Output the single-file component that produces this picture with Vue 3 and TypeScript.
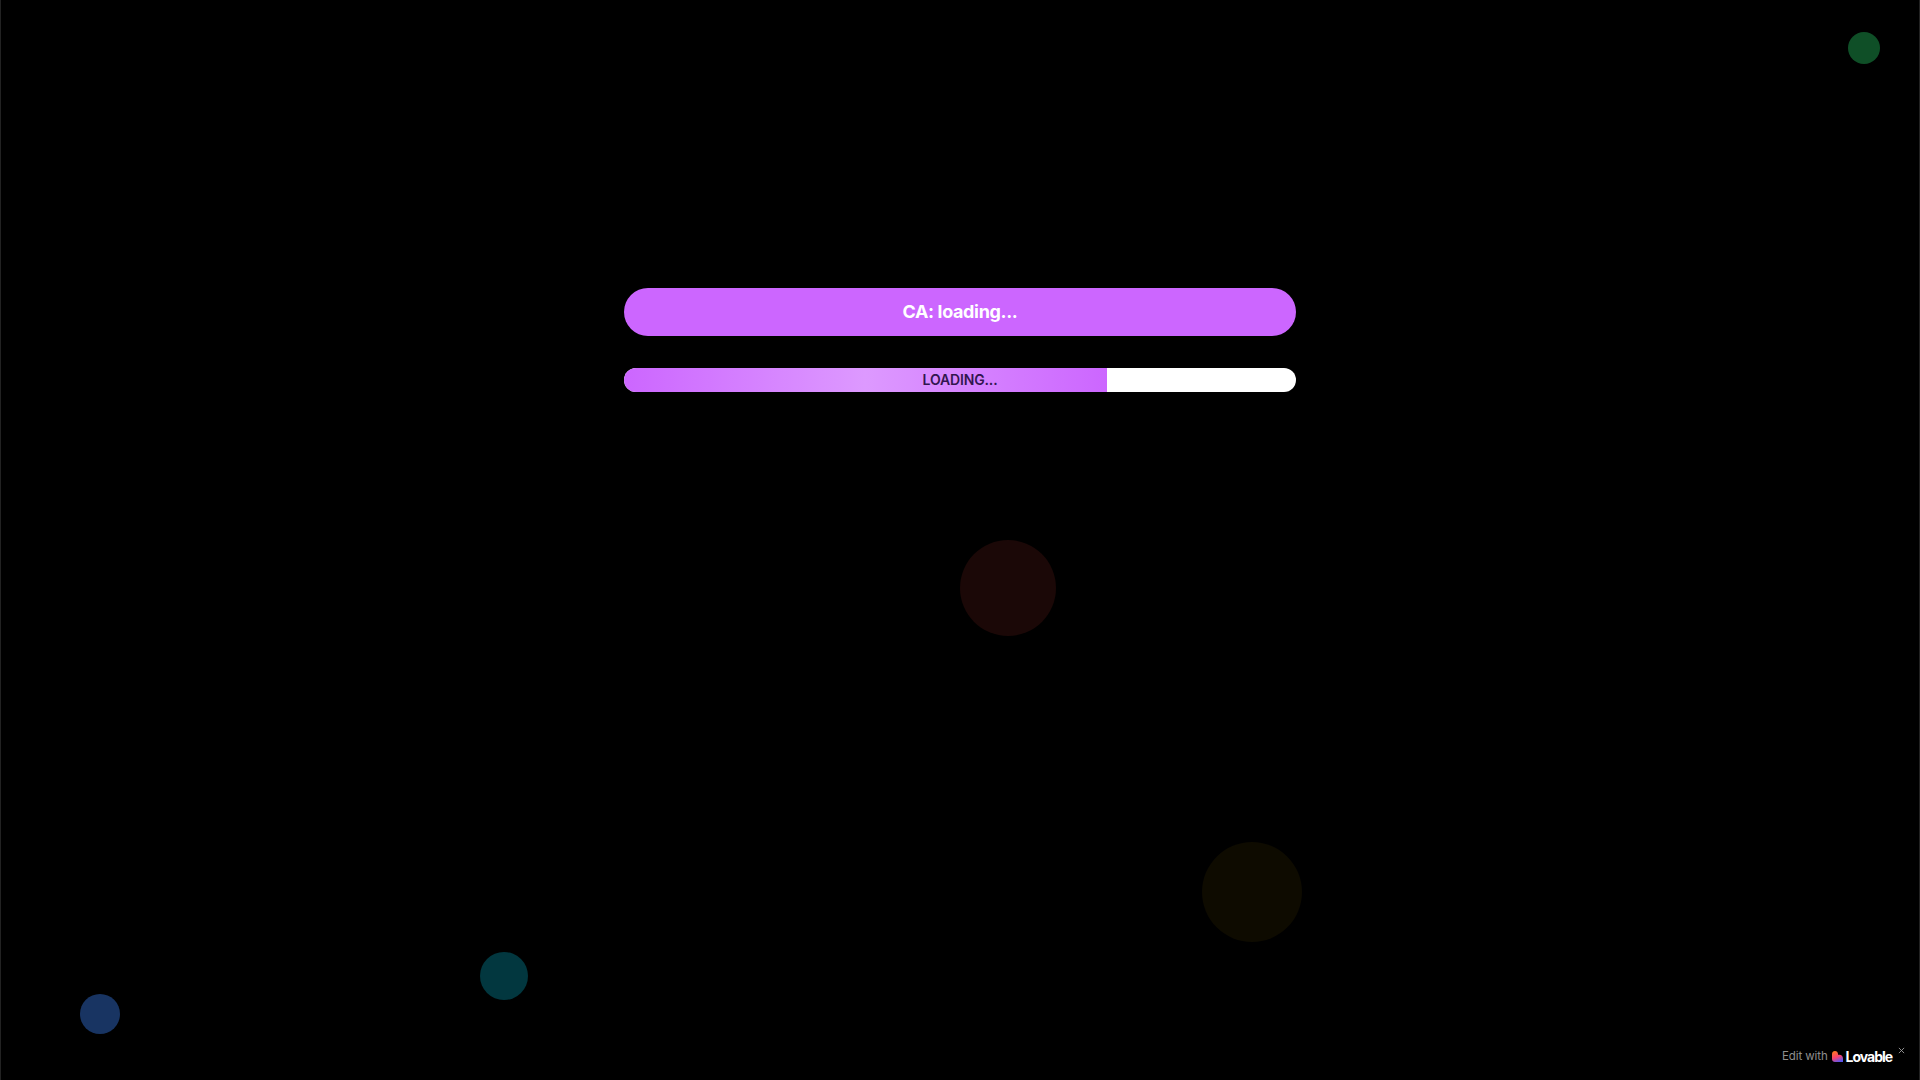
<script setup lang="ts">
interface Orb { x: number; y: number; size: number; color: string }
const orbs: Orb[] = [
  { x: 1848, y: 32, size: 32, color: '#0f4f27' },
  { x: 960, y: 540, size: 96, color: '#1b0807' },
  { x: 1202, y: 842, size: 100, color: '#0e0b00' },
  { x: 480, y: 952, size: 48, color: '#02373f' },
  { x: 80, y: 994, size: 40, color: '#183462' },
]
</script>

<template>
  <div class="page">
    <div
      v-for="o in orbs"
      :key="o.x"
      class="orb"
      :style="{ left: o.x + 'px', top: o.y + 'px', width: o.size + 'px', height: o.size + 'px', background: o.color }"
    ></div>
    <main class="column">
      <button class="ca" type="button">CA: loading...</button>
      <div class="track">
        <div class="fill"></div>
        <span class="label">LOADING...</span>
      </div>
    </main>
    <div class="badge">
      <span class="edit">Edit with</span>
      <svg class="heart" viewBox="0 0 11 11" width="11" height="11" aria-hidden="true">
        <defs>
          <linearGradient id="hg" x1="0.2" y1="0" x2="0.6" y2="1">
            <stop offset="0" stop-color="#ff7a1f" />
            <stop offset="0.55" stop-color="#f7416f" />
            <stop offset="1" stop-color="#5b56ec" />
          </linearGradient>
        </defs>
        <path d="M3 0C4.7 0 6 1.3 6 3V3.8H7.4C9.4 3.8 11 5.4 11 7.4V11H3C1.3 11 0 9.7 0 8V3C0 1.3 1.3 0 3 0Z" fill="url(#hg)" />
      </svg>
      <span class="brand">Lovable</span>
      <svg class="close" viewBox="0 0 8 8" width="7" height="7" aria-hidden="true">
        <path d="M1 1L7 7M7 1L1 7" stroke="#a0a0a0" stroke-width="1" fill="none" />
      </svg>
    </div>
  </div>
</template>

<style>
html, body { margin: 0; background: #000; }
</style>

<style scoped>
.page {
  position: relative;
  width: 100%;
  height: 1080px;
  overflow: hidden;
  background: #000;
  box-shadow: inset 1px 0 #222, inset -1px 0 #222;
  font-family: Inter, "Liberation Sans", sans-serif;
}
.orb {
  position: absolute;
  border-radius: 50%;
}
.column {
  position: relative;
  width: 672px;
  margin: 0 auto;
  padding-top: 288px;
  display: flex;
  flex-direction: column;
  gap: 32px;
}
.ca {
  height: 48px;
  border: 0;
  border-radius: 24px;
  background: #cc66ff;
  color: #fff;
  font: 700 18px/28px Inter, "Liberation Sans", sans-serif;
  letter-spacing: -0.35px;
  padding: 0;
}
.track {
  position: relative;
  height: 24px;
  border-radius: 12px;
  overflow: hidden;
  background: #fff;
  display: flex;
  align-items: center;
  justify-content: center;
}
.fill {
  position: absolute;
  left: 0;
  top: 0;
  bottom: 0;
  width: 483px;
  background: linear-gradient(90deg, #cc66ff 0%, #dd99ff 50%, #cc66ff 100%);
}
.label {
  position: relative;
  font-size: 14px;
  line-height: 20px;
  font-weight: 600;
  letter-spacing: -0.15px;
  color: #32164f;
}
.badge {
  position: absolute;
  left: 1782px;
  top: 1042px;
  height: 28px;
  display: flex;
  align-items: center;
  color: #fff;
}
.edit {
  font-size: 11.5px;
  line-height: 16px;
  letter-spacing: -0.1px;
  color: #8f8f8f;
  margin-right: 4px;
}
.heart {
  margin-right: 3px;
  margin-top: 1px;
}
.brand {
  font-size: 14px;
  line-height: 18px;
  font-weight: 700;
  letter-spacing: -1px;
  color: #fff;
  margin-top: 2px;
}
.close {
  position: absolute;
  left: 116px;
  top: 5px;
}
</style>
